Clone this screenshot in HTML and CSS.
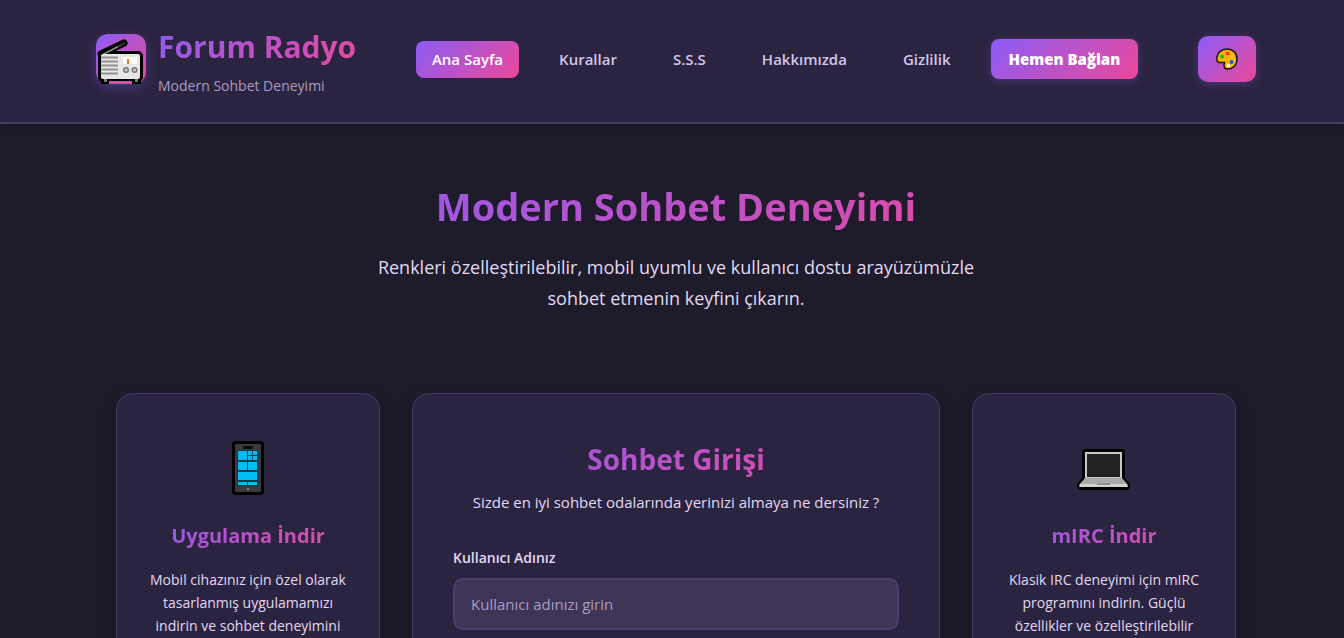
FILE: index.html
```html
<!DOCTYPE html>
<html lang="tr">

<head>
  <meta charset="UTF-8">
  <meta name="viewport" content="width=device-width, initial-scale=1">
  <title>Forum Radyo</title>
  <link rel="stylesheet" href="styles.css">
</head>

<body>

  <header class="header">
    <div class="container header-inner">
      <div class="logo">
        <div class="logo-icon">
          <svg viewBox="0 0 50 50" width="50" height="50" aria-hidden="true">
            <path d="M5 20 L28 9" stroke="#000" stroke-width="7" stroke-linecap="round"/>
            <path d="M5 44h9v6H5zM36 44h9v6h-9z" fill="#000"/>
            <rect x="2" y="17" width="45" height="31" rx="5" fill="#000"/>
            <rect x="13" y="47" width="23" height="3" fill="#d44fa8"/>
            <path d="M7 20.500 L28 9.500" stroke="#333" stroke-width="2.500" stroke-linecap="round"/>
            <path d="M7 20.500 L22 12.500" stroke="#bbb" stroke-width="1"/>
            <rect x="5" y="20" width="39" height="25" rx="2" fill="#e6e6e6"/>
            <path d="M5 23.500h17M5 27.500h17M5 31.500h17M5 35.500h17M5 39.500h17" stroke="#929292" stroke-width="2"/>
            <path d="M8 46.500h3M39 46.500h3" stroke="#777" stroke-width="3"/>
            <rect x="27" y="23" width="14" height="7" fill="#fff"/>
            <rect x="31" y="25" width="2" height="5" fill="#f7762b"/>
            <circle cx="30" cy="36" r="2.300" fill="#ccc" stroke="#777" stroke-width="1.500"/>
            <circle cx="38.500" cy="36" r="2.300" fill="#ccc" stroke="#777" stroke-width="1.500"/>
          </svg>
        </div>
        <div class="logo-text">
          <div class="logo-title">Forum Radyo</div>
          <div class="logo-subtitle">Modern Sohbet Deneyimi</div>
        </div>
      </div>

      <nav class="nav">
        <a href="#" class="nav-link active">Ana Sayfa</a>
        <a href="#" class="nav-link">Kurallar</a>
        <a href="#" class="nav-link">S.S.S</a>
        <a href="#" class="nav-link">Hakkımızda</a>
        <a href="#" class="nav-link">Gizlilik</a>
        <a href="#giris" class="connect-btn">Hemen Bağlan</a>
      </nav>

      <button type="button" class="theme-btn" aria-label="Renkler">
        <svg viewBox="0 0 22 22" width="22" height="22" aria-hidden="true">
          <path d="M11 1C5 1 1 5 .8 11c0 2.500 1.200 3.500 3 3.500h4.700c-1 2.500-.8 6.500 3 6.500 5.500 0 9.500-4 9.500-10C21 5 17 1 11 1z" fill="#fdb400" stroke="#1c1720" stroke-width="1.500"/>
          <circle cx="6" cy="8.500" r="1.900" fill="#16b21c"/>
          <circle cx="11.500" cy="5.500" r="1.900" fill="#f03a17"/>
          <circle cx="16.500" cy="8.500" r="1.500" fill="#ffc61c"/>
          <circle cx="15.500" cy="14" r="1.900" fill="#1359e8"/>
          <circle cx="12.500" cy="17.500" r="1.700" fill="#fff"/>
        </svg>
      </button>
    </div>
  </header>

  <main>
    <section class="hero">
      <h1>Modern Sohbet Deneyimi</h1>
      <p>Renkleri özelleştirilebilir, mobil uyumlu ve kullanıcı dostu arayüzümüzle sohbet etmenin keyfini çıkarın.</p>
    </section>

    <div class="container cards">
      <section class="card side-card">
        <svg class="card-icon" viewBox="0 0 64 64" width="64" height="64" aria-hidden="true">
          <rect x="16" y="5" width="32" height="54" rx="4" fill="#000"/>
          <rect x="19" y="8" width="26" height="48" rx="1" fill="#3a3a3a"/>
          <rect x="27" y="10" width="10" height="3" rx="1" fill="#0c0c0c"/>
          <rect x="21" y="14" width="22" height="36" fill="#153c48"/>
          <g fill="#00bcf2">
            <rect x="22" y="15" width="9" height="9"/>
            <rect x="32" y="15" width="4" height="4"/>
            <rect x="37" y="15" width="4" height="4"/>
            <rect x="32" y="20" width="4" height="4"/>
            <rect x="37" y="20" width="4" height="4"/>
            <rect x="22" y="26" width="9" height="8"/>
            <rect x="32" y="26" width="9" height="8"/>
            <rect x="22" y="36" width="19" height="8"/>
            <rect x="22" y="46" width="9" height="3"/>
            <rect x="32" y="46" width="9" height="3"/>
          </g>
          <circle cx="32" cy="53" r="1" fill="#999"/>
        </svg>
        <h3>Uygulama İndir</h3>
        <p>Mobil cihazınız için özel olarak tasarlanmış uygulamamızı indirin ve sohbet deneyimini</p>
      </section>

      <section class="card login-card" id="giris">
        <h2>Sohbet Girişi</h2>
        <p>Sizde en iyi sohbet odalarında yerinizi almaya ne dersiniz ?</p>
        <form>
          <label for="nick">Kullanıcı Adınız</label>
          <input type="text" id="nick" placeholder="Kullanıcı adınızı girin">
        </form>
      </section>

      <section class="card side-card">
        <svg class="card-icon" viewBox="0 0 64 64" width="64" height="64" aria-hidden="true">
          <path d="M10 16q0-3 3-3h37q3 0 3 3v26l5 6q1 5-3 6H9q-5-1-4-6l5-6z" fill="#000"/>
          <rect x="13" y="16" width="37" height="27" fill="#c8c8c8"/>
          <rect x="15" y="18" width="33" height="23" fill="#222"/>
          <path d="M13 42h37l6 7H7z" fill="#a9a9a9"/>
          <path d="M8 48h47l1 3H7z" fill="#d2d2d2"/>
          <rect x="25" y="47" width="13" height="2" fill="#919191"/>
        </svg>
        <h3>mIRC İndir</h3>
        <p>Klasik IRC deneyimi için mIRC programını indirin. Güçlü özellikler ve özelleştirilebilir</p>
      </section>
    </div>
  </main>

</body>

</html>
```

FILE: styles.css
```css
* {
  margin: 0;
  padding: 0;
  box-sizing: border-box;
}

body {
  font-family: "Open Sans", "Noto Sans", sans-serif;
  background-color: #1e1b2b;
  color: #e2d9f3;
  line-height: 1.6;
}

.container {
  max-width: 1200px;
  margin: 0 auto;
  padding: 0 16px 0 24px;
}

.header {
  background-color: #2b2440;
  border-bottom: 2px solid #443863;
  box-shadow: 0 2px 10px rgba(0, 0, 0, 0.2);
  padding: 20px 0 24px;
}

.header-inner {
  display: flex;
  align-items: center;
  justify-content: space-between;
}

.logo {
  display: flex;
  align-items: center;
  gap: 12px;
}

.logo-icon {
  width: 50px;
  height: 50px;
  border-radius: 12px;
  background: linear-gradient(135deg, #8b5cf6, #ec4899);
  box-shadow: 0 4px 12px rgba(139, 92, 246, 0.3);
}

.logo-icon svg,
.theme-btn svg {
  display: block;
}

.logo-title,
h1,
h2,
h3 {
  background: linear-gradient(135deg, #8b5cf6, #ec4899);
  -webkit-background-clip: text;
  background-clip: text;
  color: transparent;
  font-weight: 700;
}

.logo-title {
  font-size: 30px;
  line-height: 54px;
}

.logo-subtitle {
  font-size: 14px;
  line-height: 24px;
  color: #a99bc4;
}

.nav {
  display: flex;
  align-items: center;
  gap: 24px;
}

.nav-link {
  color: #d4c5ee;
  font-size: 15px;
  font-weight: 600;
  line-height: 21px;
  padding: 8px 16px;
  border-radius: 8px;
  text-decoration: none;
}

.nav-link.active,
.connect-btn,
.theme-btn {
  background: linear-gradient(135deg, #8b5cf6, #ec4899);
  color: #fff;
}

.connect-btn {
  font-size: 15px;
  font-weight: 800;
  line-height: 24px;
  padding: 8px 18px;
  border-radius: 8px;
  text-decoration: none;
  box-shadow: 0 2px 8px rgba(139, 92, 246, 0.3);
}

.theme-btn {
  border: none;
  border-radius: 10px;
  padding: 12px 18px;
  cursor: pointer;
  box-shadow: 0 2px 8px rgba(139, 92, 246, 0.3);
}

.hero {
  max-width: 808px;
  margin: 0 auto;
  padding: 48px 0 79px 8px;
  text-align: center;
}

h1 {
  font-size: 38px;
  line-height: 68px;
  margin-bottom: 12px;
}

.hero p {
  max-width: 600px;
  margin: 0 auto;
  font-size: 18px;
  line-height: 31px;
}

.cards {
  display: grid;
  grid-template-columns: 1fr 2fr 1fr;
  gap: 32px;
  padding: 0 36px 40px 44px;
}

.card {
  background-color: #2b2440;
  border: 1px solid #443863;
  border-radius: 16px;
  box-shadow: 0 4px 20px rgba(0, 0, 0, 0.2);
  text-align: center;
}

.side-card {
  padding: 42px 32px 32px;
}

.card-icon {
  display: block;
  margin: 0 auto 20px;
}

h3 {
  font-size: 20px;
  line-height: 32px;
  margin-bottom: 16px;
}

.side-card p {
  font-size: 14px;
  line-height: 23px;
}

.login-card {
  padding: 40px;
}

h2 {
  font-size: 28px;
  line-height: 50px;
  margin-bottom: 6px;
}

.login-card p {
  font-size: 15px;
  line-height: 24px;
  margin-bottom: 32px;
}

.login-card label {
  display: block;
  text-align: left;
  font-size: 14px;
  font-weight: 600;
  line-height: 24px;
  margin-bottom: 8px;
}

.login-card input {
  width: 100%;
  height: 52px;
  padding: 0 16px;
  font-family: inherit;
  font-size: 15px;
  color: #e2d9f3;
  background-color: #3d3456;
  border: 2px solid #4a3d6b;
  border-radius: 10px;
}

.login-card input::placeholder {
  color: #a99bc4;
}

@media screen and (max-width: 1000px) {
  .header-inner,
  .nav {
    flex-wrap: wrap;
  }

  .cards {
    grid-template-columns: 1fr;
  }
}
```
